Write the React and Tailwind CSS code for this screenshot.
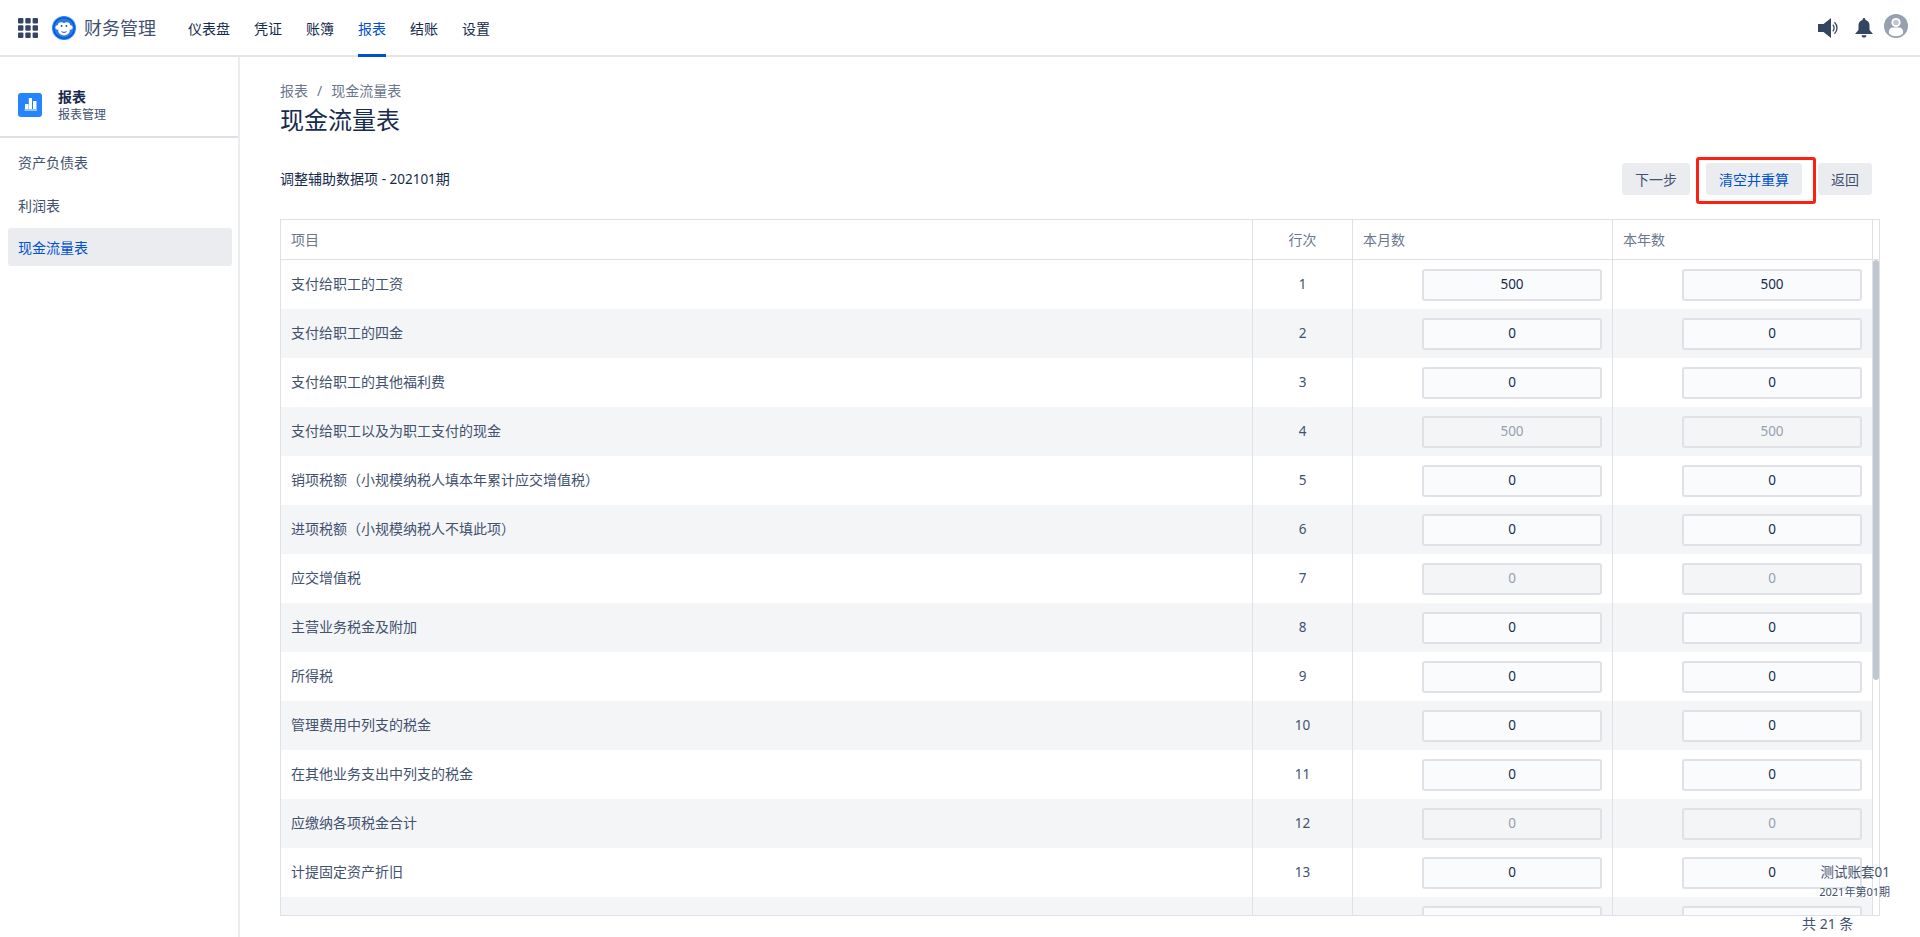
import React from "react";

const rows = [
  ["支付给职工的工资", "500", "500"],
  ["支付给职工的四金", "0", "0"],
  ["支付给职工的其他福利费", "0", "0"],
  ["支付给职工以及为职工支付的现金", "500", "500", true],
  ["销项税额（小规模纳税人填本年累计应交增值税）", "0", "0"],
  ["进项税额（小规模纳税人不填此项）", "0", "0"],
  ["应交增值税", "0", "0", true],
  ["主营业务税金及附加", "0", "0"],
  ["所得税", "0", "0"],
  ["管理费用中列支的税金", "0", "0"],
  ["在其他业务支出中列支的税金", "0", "0"],
  ["应缴纳各项税金合计", "0", "0", true],
  ["计提固定资产折旧", "0", "0"],
  ["", "", ""],
];

function Monkey() {
  return (
    <svg width="24" height="24" viewBox="0 0 24 24">
      <circle cx="12" cy="12" r="12" fill="#2684ff" />
      <circle cx="12" cy="12" r="10.8" fill="#0052cc" />
      <circle cx="12" cy="12" r="9.8" fill="#2f78e0" />
      <circle cx="5.6" cy="11.5" r="2.3" fill="#fff" />
      <circle cx="18.4" cy="11.5" r="2.3" fill="#fff" />
      <circle cx="9.2" cy="9.6" r="3.4" fill="#fff" />
      <circle cx="14.8" cy="9.6" r="3.4" fill="#fff" />
      <ellipse cx="12" cy="14.8" rx="5.8" ry="4.6" fill="#fff" />
      <circle cx="9.6" cy="10" r="0.9" fill="#0052cc" />
      <circle cx="14.4" cy="10" r="0.9" fill="#0052cc" />
      <path d="M9.5 15.5c1.5 1.2 3.5 1.2 5 0" stroke="#0052cc" strokeWidth="0.9" fill="none" />
    </svg>
  );
}

function Cell({ value, disabled }) {
  return (
    <div className={`w-[180px] h-[32px] border-2 border-[#dfe1e6] rounded-[3px] flex items-center justify-center text-[13.5px] ${disabled ? "bg-[#f4f5f7] text-[#97a0af]" : "bg-[#fafbfc] text-[#172b4d]"}`}>
      {value}
    </div>
  );
}

const sideItems = [
  ["资产负债表", "mb-[5px] pb-[2px] text-[#42526e]"],
  ["利润表", "mb-[3px] pb-[2px] text-[#42526e]"],
  ["现金流量表", "bg-[#ebecf0] text-[#0052cc]"],
];

export default function App() {
  return (
    <div className="h-[937px] overflow-hidden bg-white flex flex-col text-[#172b4d] relative" style={{ fontFamily: '"Noto Sans", "Noto Sans CJK SC", sans-serif' }}>
      <header className="h-[57px] shrink-0 border-b-2 border-[#e4e5e9] flex items-center pl-[18px] pr-[12px]">
        <svg width="20" height="20" viewBox="0 0 20 20" fill="#344563">
          {[0, 7.3, 14.6].flatMap((y) => [0, 7.3, 14.6].map((x) => <rect key={`${x}-${y}`} x={x} y={y} width="5.4" height="5.4" rx="1" />))}
        </svg>
        <div className="ml-[14px]"><Monkey /></div>
        <div className="ml-[8px] text-[18px] text-[#42526e] leading-none">财务管理</div>
        <nav className="ml-[32px] h-full flex gap-[24px] text-[14px] text-[#172b4d]">
          {["仪表盘", "凭证", "账簿", "报表", "结账", "设置"].map((t) => (
            <div key={t} className={`h-[57px] flex items-center relative ${t === "报表" ? "text-[#0052cc]" : ""}`}>
              {t}
              {t === "报表" && <div className="absolute left-0 right-0 bottom-0 h-[3px] bg-[#0052cc]" />}
            </div>
          ))}
        </nav>
        <div className="ml-auto flex items-center">
          <svg width="20" height="20" viewBox="0 0 20 20" fill="none">
            <path d="M0 6h5.500L13 0v20l-7.500-6H0z" fill="#344563" />
            <path d="M14.800 6.800a4.500 4.500 0 0 1 0 6.400M16.500 4.200a8 8 0 0 1 0 11.600" stroke="#344563" strokeWidth="1.300" />
          </svg>
          <svg className="ml-[17px]" width="18" height="20" viewBox="0 0 18 20" fill="#344563">
            <path d="M9 0a1.400 1.400 0 0 1 1.400 1.400v.5A5.500 5.500 0 0 1 14.500 7.300V12l3.500 4H0l3.500-4V7.300A5.500 5.500 0 0 1 7.600 1.900v-.5A1.400 1.400 0 0 1 9 0z" />
            <path d="M6.500 17.200h5a2.500 2.500 0 0 1-5 0z" />
          </svg>
          <svg className="ml-[11px] -mt-[3px]" width="24" height="24" viewBox="0 0 24 24">
            <circle cx="12" cy="12" r="12" fill="#97a0af" />
            <circle cx="12" cy="8.500" r="4.600" fill="#fff" />
            <circle cx="12" cy="8.500" r="2.800" fill="#c1c7d0" />
            <path d="M5 17a4 4 0 0 1 4-3.500h6a4 4 0 0 1 4 3.500v2.800a11 11 0 0 1-14 0z" fill="#fff" />
          </svg>
        </div>
      </header>

      <div className="flex-1 flex min-h-0">
        <aside className="w-[240px] shrink-0 border-r-2 border-[#ebecf0]">
          <div className="h-[81px] flex items-center pl-[18px] pt-[16px] border-b-2 border-[#dfe1e6]">
            <div className="w-[24px] h-[24px] rounded-[3px] bg-[#2684ff] flex items-center justify-center">
              <svg width="24" height="24" viewBox="0 0 24 24" fill="#fff">
                <rect x="7" y="11" width="3.500" height="5" />
                <rect x="10.800" y="5" width="3.200" height="11" />
                <rect x="15" y="8" width="3.500" height="8" />
                <rect x="6.500" y="16.500" width="12.500" height="1" />
              </svg>
            </div>
            <div className="ml-[16px] mt-[2px]">
              <div className="text-[14px] font-semibold leading-[18px] text-[#172b4d]">报表</div>
              <div className="text-[12px] leading-[18px] text-[#42526e]">报表管理</div>
            </div>
          </div>
          <div className="pl-[8px] pr-[6px] pt-[6px] text-[14px]">
            {sideItems.map(([t, cls]) => (
              <div key={t} className={`h-[38px] flex items-center px-[10px] rounded-[3px] ${cls}`}>{t}</div>
            ))}
          </div>
        </aside>

        <main className="flex-1 min-w-0 pl-[40px] pr-[40px] pt-[25px] flex flex-col">
          <div className="text-[14px] leading-[18px] text-[#6b778c] flex gap-[9px]"><span>报表</span><span>/</span><span>现金流量表</span></div>
          <h1 className="text-[24px] leading-[32px] mt-[4px] font-normal text-[#172b4d]">现金流量表</h1>
          <div className="flex items-center justify-between mt-[27px] h-[32px]">
            <div className="text-[14px] text-[#172b4d] pb-[1px]">调整辅助数据项 <span className="text-[13.5px]">- 202101</span>期</div>
            <div className="flex gap-[16px] pr-[8px] text-[14px]">
              <button className="h-[32px] w-[68px] rounded-[3px] bg-[#ebecf0] text-[#42526e]">下一步</button>
              <button className="h-[32px] w-[96px] rounded-[3px] bg-[#ebecf0] text-[#0052cc] relative">
                清空并重算
                <span className="absolute -left-[10px] -top-[6px] w-[120px] h-[47px] border-[3px] border-[#ff1f10] rounded-[3px]" />
              </button>
              <button className="h-[32px] w-[54px] rounded-[3px] bg-[#ebecf0] text-[#42526e]">返回</button>
            </div>
          </div>

          <div className="mt-[24px] h-[697px] shrink-0 border border-[#dfe1e6] flex overflow-hidden">
            <div className="w-[1591px] shrink-0 flex flex-col">
              <div className="grid grid-cols-[971px_100px_260px_260px] h-[40px] shrink-0 border-b border-[#dfe1e6] text-[14px] text-[#6b778c]">
                <div className="pl-[10px] flex items-center">项目</div>
                <div className="border-l border-[#dfe1e6] flex items-center justify-center">行次</div>
                <div className="border-l border-[#dfe1e6] pl-[10px] flex items-center">本月数</div>
                <div className="border-l border-[#dfe1e6] pl-[10px] flex items-center">本年数</div>
              </div>
              {rows.map(([label, a, b, disabled], i) => (
                <div key={i} className={`grid grid-cols-[971px_100px_260px_260px] h-[49px] shrink-0 text-[14px] ${i % 2 ? "bg-[#f4f5f7]" : "bg-white"}`}>
                  <div className="pl-[10px] pb-[2px] flex items-center text-[#42526e]">{label}</div>
                  <div className="border-l border-[#dfe1e6] flex items-center justify-center text-[13.5px] text-[#42526e]">{a ? i + 1 : ""}</div>
                  <div className="border-l border-[#dfe1e6] flex items-center justify-end pr-[10px]"><Cell value={a} disabled={disabled} /></div>
                  <div className="border-l border-[#dfe1e6] flex items-center justify-end pr-[10px]"><Cell value={b} disabled={disabled} /></div>
                </div>
              ))}
            </div>
            <div className="flex-1 border-l border-[#dfe1e6] flex flex-col">
              <div className="h-[40px] border-b border-[#dfe1e6] shrink-0" />
              <div className="w-[6px] h-[420px] bg-[#c1c7d0] rounded-[3px]" />
            </div>
          </div>
        </main>
      </div>

      <div className="absolute right-[30px] top-[863px] text-[13.5px] leading-[18px] text-[#42526e] text-right">测试账套01</div>
      <div className="absolute right-[30px] top-[883px] text-[11px] leading-[18px] text-[#42526e] text-right">2021年第01期</div>
      <div className="absolute left-[1802px] top-[914px] text-[14px] leading-[20px] text-[#42526e]">共 21 条</div>
    </div>
  );
}
